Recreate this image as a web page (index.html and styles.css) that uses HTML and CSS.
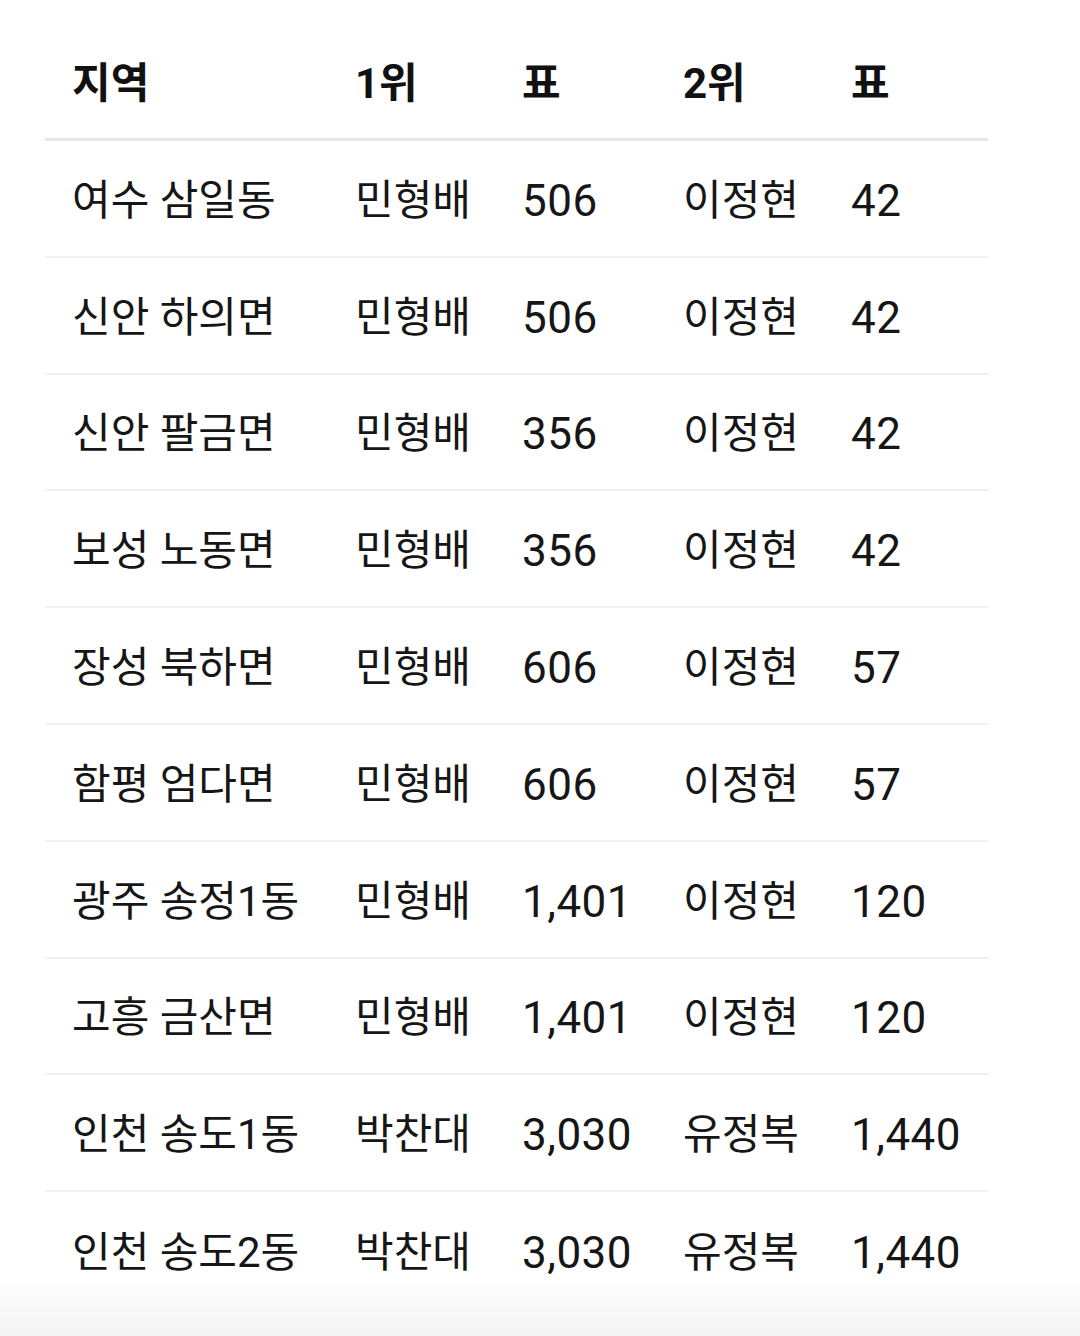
FILE: index.html
```html
<!DOCTYPE html>
<html lang="ko">
<head>
<meta charset="utf-8">
<link rel="stylesheet" href="styles.css">
</head>
<body>
<div class="page">
  <div class="table">
    <div class="row head">
      <div class="cell">지역</div><div class="cell">1위</div><div class="cell">표</div><div class="cell">2위</div><div class="cell">표</div>
    </div>
    <div class="row"><div class="cell">여수 삼일동</div><div class="cell">민형배</div><div class="cell">506</div><div class="cell">이정현</div><div class="cell">42</div></div>
    <div class="row"><div class="cell">신안 하의면</div><div class="cell">민형배</div><div class="cell">506</div><div class="cell">이정현</div><div class="cell">42</div></div>
    <div class="row"><div class="cell">신안 팔금면</div><div class="cell">민형배</div><div class="cell">356</div><div class="cell">이정현</div><div class="cell">42</div></div>
    <div class="row"><div class="cell">보성 노동면</div><div class="cell">민형배</div><div class="cell">356</div><div class="cell">이정현</div><div class="cell">42</div></div>
    <div class="row"><div class="cell">장성 북하면</div><div class="cell">민형배</div><div class="cell">606</div><div class="cell">이정현</div><div class="cell">57</div></div>
    <div class="row"><div class="cell">함평 엄다면</div><div class="cell">민형배</div><div class="cell">606</div><div class="cell">이정현</div><div class="cell">57</div></div>
    <div class="row"><div class="cell">광주 송정1동</div><div class="cell">민형배</div><div class="cell">1,401</div><div class="cell">이정현</div><div class="cell">120</div></div>
    <div class="row"><div class="cell">고흥 금산면</div><div class="cell">민형배</div><div class="cell">1,401</div><div class="cell">이정현</div><div class="cell">120</div></div>
    <div class="row"><div class="cell">인천 송도1동</div><div class="cell">박찬대</div><div class="cell">3,030</div><div class="cell">유정복</div><div class="cell">1,440</div></div>
    <div class="row last"><div class="cell">인천 송도2동</div><div class="cell">박찬대</div><div class="cell">3,030</div><div class="cell">유정복</div><div class="cell">1,440</div></div>
  </div>
</div>
</body>
</html>
```

FILE: styles.css
```css
html, body {
  margin: 0;
  padding: 0;
}
body {
  width: 1080px;
  height: 1336px;
  overflow: hidden;
  background: linear-gradient(to bottom, #ffffff 0px, #ffffff 1280px, #f3f3f3 1336px);
  font-family: Roboto, "Noto Sans CJK KR", sans-serif;
  color: #161616;
}
.page {
  padding: 25px 92px 0 45px;
}
.table {
  display: flex;
  flex-direction: column;
}
.row {
  display: grid;
  grid-template-columns: 283px 167px 161px 168px 164px;
  box-sizing: border-box;
  height: 116.8px;
  padding-top: 5px;
  border-bottom: 2px solid #f1f1f1;
  align-items: center;
}
.row.head {
  height: 116px;
  border-bottom: 3px solid #e7e7e7;
  font-weight: 700;
  color: #111;
}
.row.last {
  border-bottom: none;
}
.cell {
  padding-left: 27px;
  font-size: 42px;
  line-height: 1;
  white-space: nowrap;
}
.row:not(.head) .cell:nth-child(3),
.row:not(.head) .cell:nth-child(5) {
  font-size: 44px;
  letter-spacing: 0.5px;
}
```
